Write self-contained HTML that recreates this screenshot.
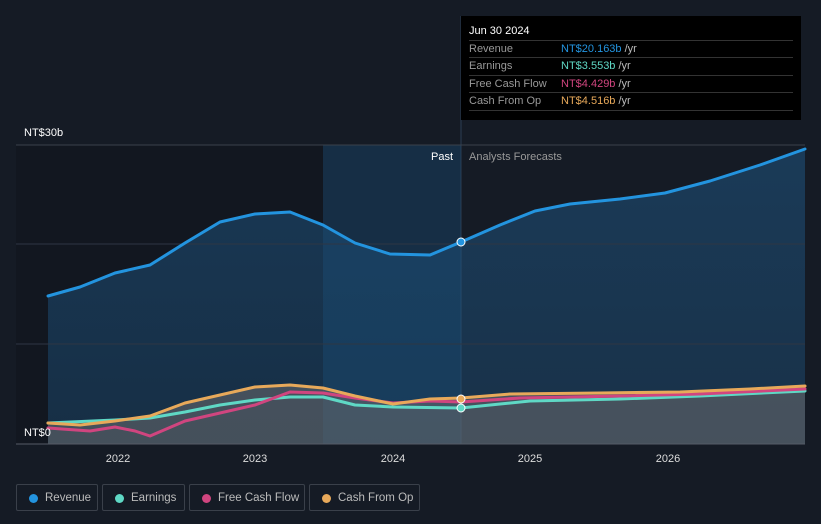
<!DOCTYPE html>
<html><head><meta charset="utf-8"><style>
body{margin:0;background:#151b25;width:821px;height:524px;overflow:hidden;font-family:"Liberation Sans",sans-serif}
svg{position:absolute;left:0;top:0}
.tt{position:absolute;left:461px;top:16px;width:340px;height:104px;background:#000;}
.tt .h{position:absolute;left:8px;top:9px;color:#fff;font-size:11px}
.row{position:absolute;left:8px;width:324px;height:17px;border-top:1px solid #333;font-size:11px;line-height:17px;color:#999}
.row span{position:absolute;left:92px}
.row i{font-style:normal;color:#bbb}
.leg{position:absolute;top:484px;height:27px;border:1px solid #3a404a;border-radius:2px;color:#bbb;font-size:11.5px;line-height:27px;box-sizing:border-box}
.leg b{position:absolute;left:12px;top:9px;width:9px;height:9px;border-radius:50%}
.leg span{position:absolute;left:28px}
</style></head><body>
<svg width="821" height="524">
<defs>
<linearGradient id="g" x1="0" y1="0" x2="0" y2="1"><stop offset="0" stop-color="#1f5a8a" stop-opacity=".5"/><stop offset="1" stop-color="#1f5a8a" stop-opacity=".35"/></linearGradient>
</defs>
<rect x="16" y="145" width="307" height="299" fill="#121720"/>
<rect x="323" y="145" width="138" height="299" fill="#14202d"/>
<line x1="461" y1="16" x2="461" y2="444" stroke="#2c3e52" stroke-width="1"/>
<polygon fill="url(#g)" points="48,296 80,287 115,273 150,265 185,243 220,222 255,214 290,212 323,225 355,243 390,254 430,255 461,242 500,225 535,211 570,204 620,199 665,193 710,181 760,165 805,149 805,444 48,444"/>
<rect x="323" y="145" width="138" height="299" fill="#1a4a72" opacity=".35"/>
<polygon fill="#6b6b6e" opacity=".55" points="48,423 80,425 115,421 150,416 185,403 220,395 255,387 290,385 323,388 355,396 393,404 430,399 461,398 510,394 600,393 680,392 750,389 805,386 805,444 48,444"/>
<g stroke="#2e3643" stroke-width="1"><line x1="16" y1="145" x2="805" y2="145" stroke="#3a414c"/><line x1="16" y1="244" x2="805" y2="244"/><line x1="16" y1="344" x2="805" y2="344"/></g>
<line x1="16" y1="444" x2="805" y2="444" stroke="#555b66"/>
<g fill="none" stroke-width="3" stroke-linejoin="round" stroke-linecap="round">
<polyline stroke="#2394df" points="48,296 80,287 115,273 150,265 185,243 220,222 255,214 290,212 323,225 355,243 390,254 430,255 461,242 500,225 535,211 570,204 620,199 665,193 710,181 760,165 805,149"/>
<polyline stroke="#5fd8c5" points="48,423 115,420 150,418 185,412 220,405 255,400 290,397 323,397 355,405 393,407 461,408 500,404 530,401 620,399 700,396 805,391"/>
<polyline stroke="#d0457f" points="48,428 90,431 115,427 135,431 150,436 185,421 220,413 255,405 290,392 323,393 355,398 393,403 430,401 461,402 520,398 620,396 700,394 805,389"/>
<polyline stroke="#e8a95a" points="48,423 80,425 115,421 150,416 185,403 220,395 255,387 290,385 323,388 355,396 393,404 430,399 461,398 510,394 600,393 680,392 750,389 805,386"/>
</g>
<circle cx="461" cy="242" r="4" fill="#2394df" stroke="#fff" stroke-width="1"/>
<circle cx="461" cy="399" r="4" fill="#e8a95a" stroke="#fff" stroke-width="1"/>
<circle cx="461" cy="408" r="4" fill="#5fd8c5" stroke="#fff" stroke-width="1"/>
<g font-family="Liberation Sans" font-size="11">
<text x="24" y="136" fill="#fff">NT$30b</text>
<text x="24" y="436" fill="#fff">NT$0</text>
<text x="453" y="160" fill="#fff" text-anchor="end">Past</text>
<text x="469" y="160" fill="#999">Analysts Forecasts</text>
<g fill="#ddd" text-anchor="middle"><text x="118" y="462">2022</text><text x="255" y="462">2023</text><text x="393" y="462">2024</text><text x="530" y="462">2025</text><text x="668" y="462">2026</text></g>
</g>
</svg>
<div class="tt"><div class="h">Jun 30 2024</div>
<div class="row" style="top:24px">Revenue<span><em style="font-style:normal;color:#2394df">NT$20.163b</em> <i>/yr</i></span></div>
<div class="row" style="top:41px">Earnings<span><em style="font-style:normal;color:#5fd8c5">NT$3.553b</em> <i>/yr</i></span></div>
<div class="row" style="top:59px">Free Cash Flow<span><em style="font-style:normal;color:#d0457f">NT$4.429b</em> <i>/yr</i></span></div>
<div class="row" style="top:76px;border-bottom:1px solid #333">Cash From Op<span><em style="font-style:normal;color:#e8a95a">NT$4.516b</em> <i>/yr</i></span></div>
</div>
<div class="leg" style="left:16px;width:82px"><b style="background:#2394df"></b><span>Revenue</span></div>
<div class="leg" style="left:102px;width:83px"><b style="background:#5fd8c5"></b><span>Earnings</span></div>
<div class="leg" style="left:189px;width:116px"><b style="background:#d0457f"></b><span>Free Cash Flow</span></div>
<div class="leg" style="left:309px;width:111px"><b style="background:#e8a95a"></b><span>Cash From Op</span></div>
</body></html>
